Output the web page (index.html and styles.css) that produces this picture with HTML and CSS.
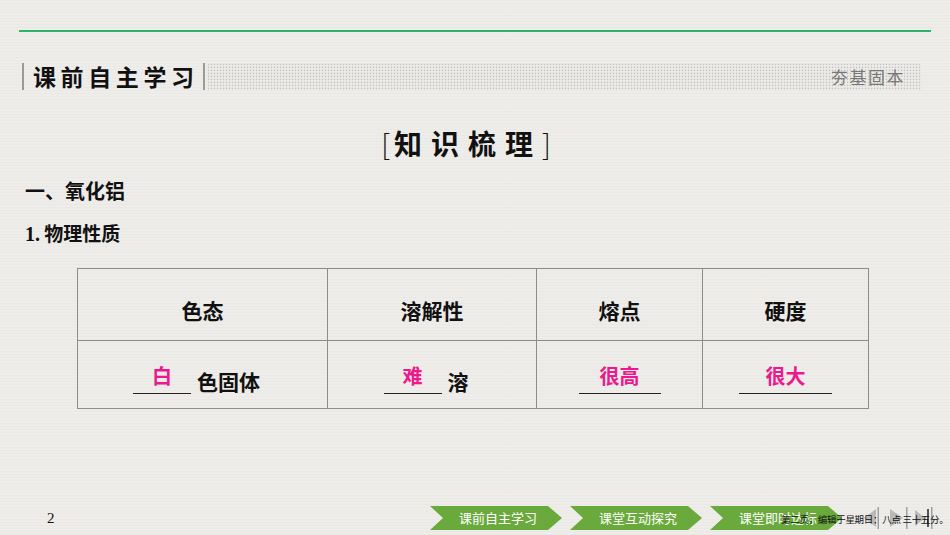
FILE: index.html
```html
<!DOCTYPE html>
<html lang="zh">
<head>
<meta charset="utf-8">
<link rel="stylesheet" href="styles.css">
</head>
<body>
<div class="slide">
  <div class="topline"></div>
  <div class="header">
    <div class="vbar"></div>
    <div class="htitle">课前自主学习</div>
    <div class="vbar"></div>
    <div class="dots"><span class="hsub">夯基固本</span></div>
  </div>
  <div class="title"><span class="br">[</span>知识梳理<span class="br">]</span></div>
  <div class="sec">一、氧化铝</div>
  <div class="sec sec2"><span class="num">1.</span> 物理性质</div>
  <table class="props">
    <tr class="head">
      <td class="c1">色态</td>
      <td class="c2">溶解性</td>
      <td class="c3">熔点</td>
      <td class="c4">硬度</td>
    </tr>
    <tr class="ans">
      <td><div class="cell"><span class="blank w58">白</span><span class="txt">色固体</span></div></td>
      <td><div class="cell"><span class="blank w58">难</span><span class="txt">溶</span></div></td>
      <td><div class="cell"><span class="blank w82">很高</span></div></td>
      <td><div class="cell"><span class="blank w93">很大</span></div></td>
    </tr>
  </table>
  <div class="footer">
    <div class="pnum">2</div>
    <div class="chev">课前自主学习</div>
    <div class="chev">课堂互动探究</div>
    <div class="chev">课堂即时达标</div>
    <svg class="navbtns" width="80" height="26" viewBox="0 0 80 26">
      <polygon points="16,4 16,22 4,13" fill="#b9b9b9"/>
      <rect x="17.5" y="2" width="1.5" height="22" fill="#a0a0a0"/>
      <polygon points="30,4 30,22 43,13" fill="#b9b9b9"/>
      <rect x="46" y="2" width="1.5" height="22" fill="#a0a0a0"/>
      <polygon points="55,5 55,21 65,13" fill="#b9b9b9"/>
      <rect x="67" y="4" width="2" height="18" fill="#555"/>
      <rect x="71" y="2" width="1.5" height="22" fill="#a0a0a0"/>
    </svg>
    <div class="stamp">第二页，编辑于星期日：八点 三十五分。</div>
  </div>
</div>
</body>
</html>
```

FILE: styles.css
```css
html, body {
  margin: 0;
  padding: 0;
}
body {
  width: 950px;
  height: 535px;
  overflow: hidden;
  font-family: "Noto Sans CJK SC", "Noto Sans", sans-serif;
}
.slide {
  position: relative;
  width: 950px;
  height: 535px;
  display: flex;
  flex-direction: column;
  background-color: #efedea;
  background-image: repeating-linear-gradient(0deg, rgba(0,0,0,0.018) 0 1px, rgba(255,255,255,0.02) 1px 3px);
}
.topline {
  margin-top: 30px;
  margin-left: 19px;
  width: 912px;
  height: 2px;
  background: #2eb46a;
}
.header {
  margin-top: 31px;
  margin-left: 22px;
  height: 27px;
  display: flex;
  align-items: stretch;
}
.vbar {
  width: 2px;
  background: #9a9a9a;
}
.htitle {
  width: 179px;
  padding-left: 9px;
  box-sizing: border-box;
  font-size: 23px;
  font-weight: 700;
  line-height: 26px;
  letter-spacing: 4.6px;
  color: #111;
}
.dots {
  margin-left: 2px;
  width: 714px;
  display: flex;
  justify-content: flex-end;
  align-items: center;
  background-image: radial-gradient(circle, #c2c2c2 0.7px, transparent 1.1px);
  background-size: 3px 3px;
}
.hsub {
  margin-right: 16px;
  font-size: 17px;
  letter-spacing: 1.5px;
  color: #777;
  line-height: 22px;
}
.title {
  margin-top: 35px;
  text-align: center;
  font-size: 28px;
  line-height: 36px;
  font-weight: 700;
  letter-spacing: 9px;
  color: #111;
  padding-right: 14px;
}
.title .br {
  font-weight: 300;
  letter-spacing: 4px;
}
.sec {
  margin-top: 16px;
  margin-left: 25px;
  font-size: 20px;
  line-height: 28px;
  font-weight: 700;
  color: #111;
}
.sec2 {
  margin-top: 14px;
  font-size: 19px;
}
.num {
  font-family: "Liberation Serif", serif;
  font-size: 20px;
}
.props {
  margin-top: 20px;
  margin-left: 77px;
  border-collapse: collapse;
  width: 792px;
}
.props td {
  border: 1px solid #8d8d8d;
  padding: 0;
  text-align: center;
}
.c1 { width: 250px; }
.c2 { width: 209px; }
.c3 { width: 166px; }
.c4 { width: 166px; }
.head td {
  height: 72px;
  font-size: 21px;
  font-weight: 700;
  color: #111;
  padding-top: 10px;
  box-sizing: border-box;
}
.ans td {
  height: 67px;
}
.cell {
  display: flex;
  justify-content: center;
  align-items: flex-end;
  gap: 6px;
  padding-top: 8px;
}
.blank {
  display: inline-block;
  border-bottom: 1.5px solid #222;
  color: #ec188c;
  font-size: 20px;
  font-weight: 700;
  line-height: 24px;
  padding-bottom: 5px;
  text-align: center;
}
.w58 { width: 58px; margin-left: -12px; }
.w82 { width: 82px; }
.w93 { width: 93px; }
.txt {
  font-size: 21px;
  font-weight: 700;
  line-height: 26px;
  color: #111;
}
.footer {
  margin-top: auto;
  margin-bottom: 5px;
  height: 24px;
  display: flex;
  align-items: center;
  gap: 8px;
}
.pnum {
  width: 375px;
  padding-left: 47px;
  font-family: "Liberation Serif", serif;
  font-size: 15px;
  color: #111;
}
.chev {
  width: 132px;
  height: 24px;
  line-height: 24px;
  background: #6aaa3c;
  color: #fff;
  font-size: 13px;
  text-align: center;
  padding-left: 4px;
  box-sizing: border-box;
  clip-path: polygon(0 0, 118px 0, 132px 50%, 118px 100%, 0 100%, 13px 50%);
}
.navbtns {
  margin-left: 10px;
}
.stamp {
  position: absolute;
  left: 781px;
  top: 513px;
  font-size: 9.5px;
  line-height: 12px;
  color: #111;
  white-space: nowrap;
  letter-spacing: -0.3px;
}
```
